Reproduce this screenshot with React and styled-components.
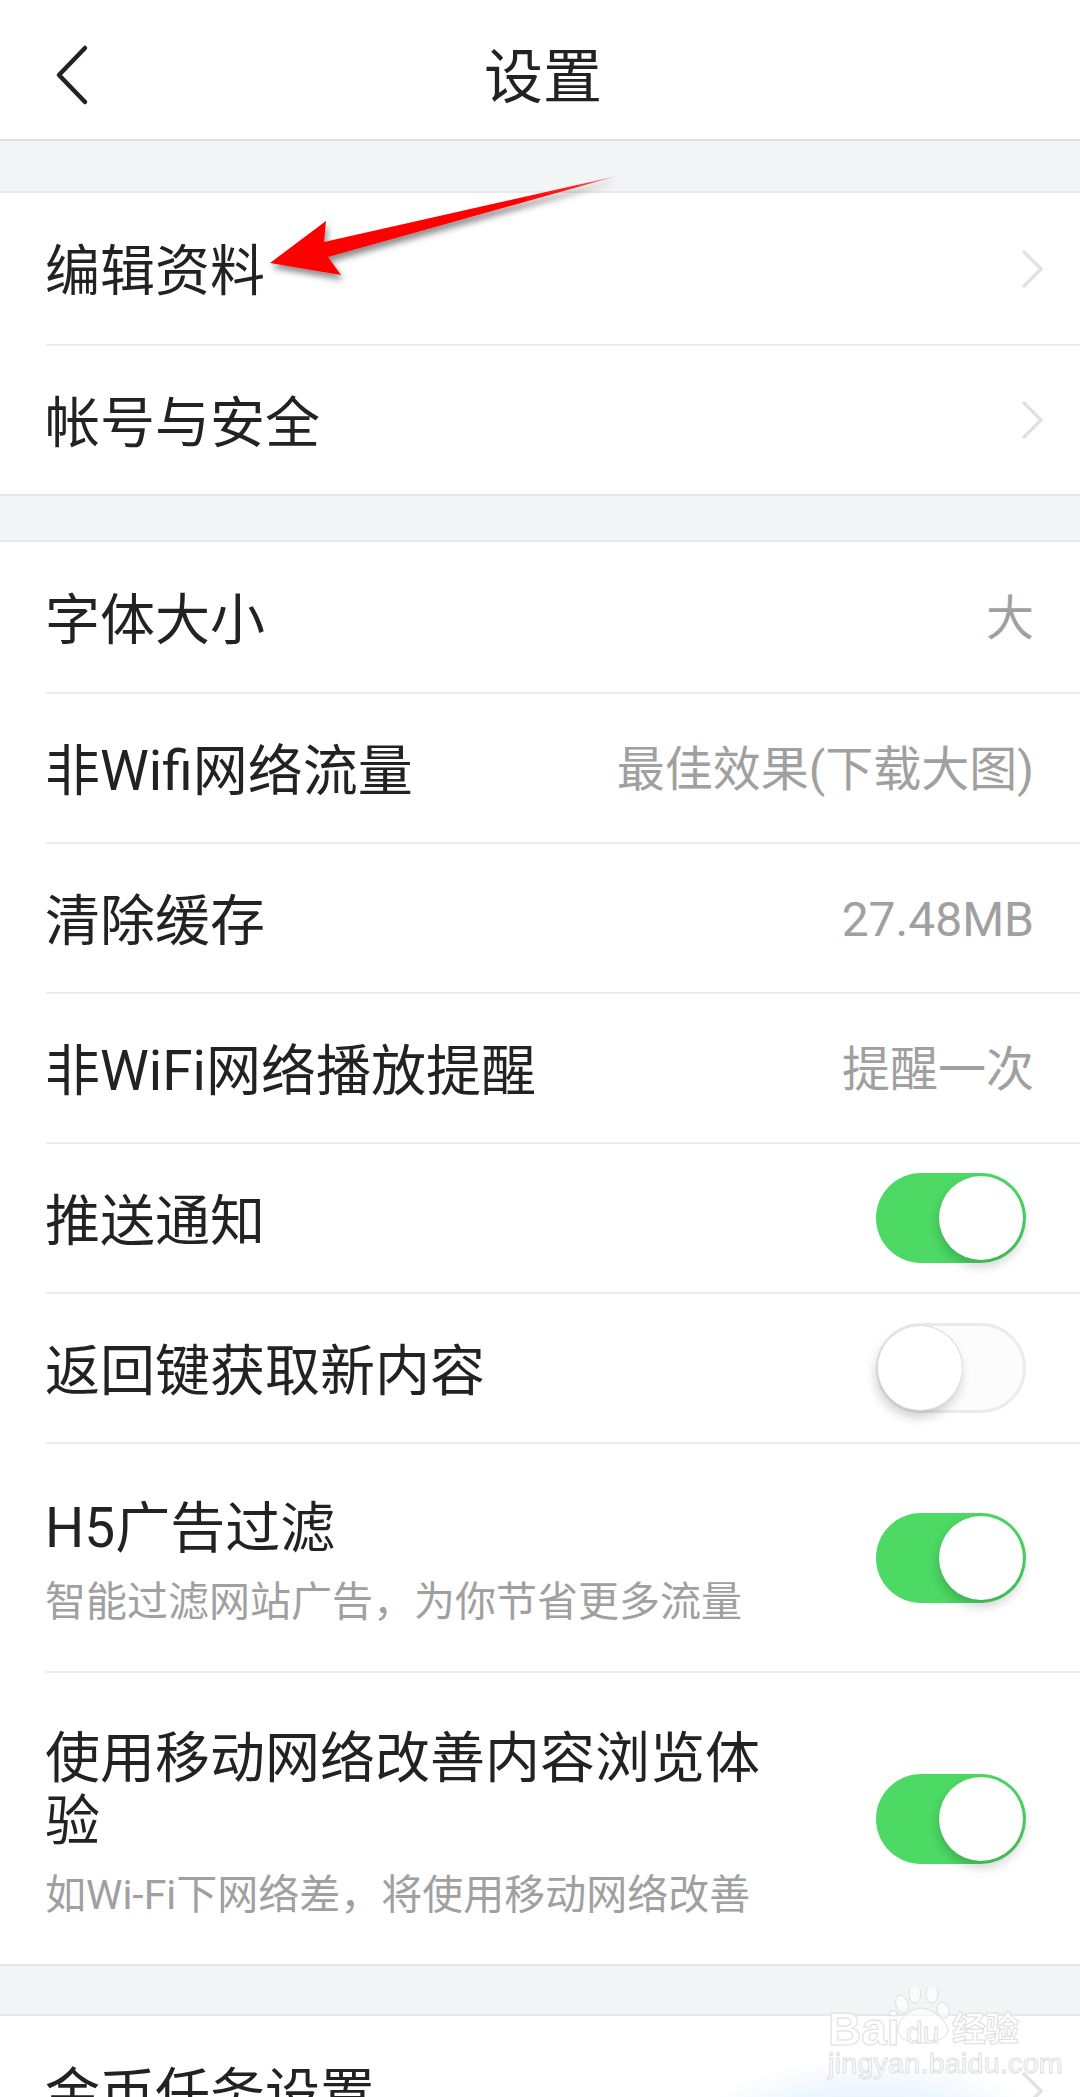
import React from "react";
import styled, { createGlobalStyle } from "styled-components";

const Global = createGlobalStyle`
  html, body { margin: 0; padding: 0; background: #fff; }
  * { box-sizing: border-box; }
`;
const Page = styled.div`
  position: relative;
  width: 1080px;
  height: 2097px;
  overflow: hidden;
  background: #f3f4f6;
  font-family: Roboto, "Noto Sans CJK SC", "Noto Sans", sans-serif;
  color: #222;
`;
const Header = styled.header`
  height: 141px;
  background: #fff;
  border-bottom: 2px solid #e0e0e0;
  display: flex;
  align-items: center;
  justify-content: center;
  position: relative;
`;
const Back = styled.svg`
  position: absolute;
  left: 52px;
  top: 36px;
`;
const Title = styled.h1`
  margin: 0;
  font-size: 59px;
  font-weight: 400;
  line-height: 1;
  padding: 15px 0 0 6px;
`;
const Section = styled.section`
  background: #fff;
  margin-top: ${p => p.$gap}px;
  border-top: 2px solid #e8e8e8;
  border-bottom: 2px solid #e4e4e4;
`;
const Row = styled.div`
  height: ${p => p.$h}px;
  margin-left: 46px;
  padding-right: ${p => p.$pr ?? 46}px;
  display: flex;
  align-items: center;
  justify-content: space-between;
  border-bottom: ${p => (p.$last ? "none" : "2px solid #ececec")};
`;
const TextCol = styled.div`
  display: flex;
  flex-direction: column;
  padding-top: 6px;
  width: ${p => (p.$wide ? "730px" : "auto")};
`;
const Label = styled.div`
  font-size: 55px;
  line-height: 63px;
  font-weight: 400;
  margin-left: -1px;
  padding-top: 6px;
  color: #222;
`;
const Sub = styled.div`
  font-size: 41px;
  line-height: 56px;
  margin-top: 14px;
  margin-left: -1px;
  white-space: nowrap;
  color: #a0a0a0;
`;
const Value = styled.div`
  font-size: 48px;
  line-height: 1;
  padding-top: 4px;
  color: #a0a0a0;
`;
const Chevron = styled.svg`
  display: block;
`;
const Track = styled.div`
  width: 150px;
  height: 90px;
  border-radius: 45px;
  flex: none;
  position: relative;
  background: ${p => (p.$on ? "#4cd964" : "#fcfcfc")};
  border: ${p => (p.$on ? "none" : "3px solid #ebebeb")};
`;
const Knob = styled.div`
  position: absolute;
  width: 84px;
  height: 84px;
  border-radius: 50%;
  background: #fff;
  top: ${p => (p.$on ? "3px" : "0")};
  ${p => (p.$on ? "right: 3px;" : "left: -1px;")}
  box-shadow: ${p => (p.$on
    ? "0 6px 12px rgba(0,0,0,0.2)"
    : "0 0 0 1px #ddd, -2px 7px 12px rgba(0,0,0,0.2)")};
`;
const Arrow = styled.svg`
  position: absolute;
  left: 0;
  top: 0;
  pointer-events: none;
`;
const Glow = styled.div`
  position: absolute;
  left: 700px;
  top: 2058px;
  width: 340px;
  height: 124px;
  border-radius: 50%;
  background: radial-gradient(closest-side, #e4f1fd 0%, #eef6fe 55%, rgba(255,255,255,0) 100%);
`;
const Watermark = styled.div`
  position: absolute;
  left: 826px;
  top: 1978px;
  width: 200px;
  height: 100px;
  color: #fff;
  -webkit-text-stroke: 1px #dedede;
  font-family: "Liberation Sans", sans-serif;
`;
const Paw = styled.svg`
  position: absolute;
  left: 68px;
  top: 10px;
`;
const WmBrand = styled.div`
  position: absolute;
  left: 2px;
  top: 32px;
  font-size: 46px;
  line-height: 38px;
  font-weight: 700;
`;
const WmDu = styled.div`
  position: absolute;
  left: 80px;
  top: 42px;
  font-size: 30px;
  line-height: 26px;
`;
const WmCn = styled.div`
  position: absolute;
  left: 126px;
  top: 30px;
  font-family: "Noto Sans CJK SC", sans-serif;
  font-size: 34px;
  line-height: 38px;
  font-weight: 700;
  letter-spacing: -1px;
`;
const WmUrl = styled.div`
  position: absolute;
  left: 2px;
  top: 71px;
  font-size: 28.5px;
  line-height: 28px;
  letter-spacing: 0.3px;
`;

const Arrowhead = () => (
  <Chevron width="26" height="42" viewBox="0 0 26 42">
    <path d="M3 3 L21 21 L3 39" fill="none" stroke="#e2e2e2" strokeWidth="3.5" />
  </Chevron>
);
const Toggle = ({ on }) => (
  <Track $on={on}><Knob $on={on} /></Track>
);

export default function App() {
  return (
    <Page>
      <Global />
      <Header>
        <Back width="40" height="78" viewBox="0 0 40 78">
          <path d="M33 12 L7 39 L33 66" fill="none" stroke="#222" strokeWidth="4.5" strokeLinecap="round" strokeLinejoin="round" />
        </Back>
        <Title>设置</Title>
      </Header>
      <Section $gap={50}>
        <Row $h={153} $pr={34}><Label>编辑资料</Label><Arrowhead /></Row>
        <Row $h={148} $pr={34} $last><Label>帐号与安全</Label><Arrowhead /></Row>
      </Section>
      <Section $gap={44}>
        <Row $h={152}><Label>字体大小</Label><Value>大</Value></Row>
        <Row $h={150}><Label>非Wifi网络流量</Label><Value>最佳效果(下载大图)</Value></Row>
        <Row $h={150}><Label>清除缓存</Label><Value>27.48MB</Value></Row>
        <Row $h={150}><Label>非WiFi网络播放提醒</Label><Value>提醒一次</Value></Row>
        <Row $h={150} $pr={54}><Label>推送通知</Label><Toggle on /></Row>
        <Row $h={150} $pr={54}><Label>返回键获取新内容</Label><Toggle /></Row>
        <Row $h={229} $pr={54}>
          <TextCol>
            <Label>H5广告过滤</Label>
            <Sub>智能过滤网站广告，为你节省更多流量</Sub>
          </TextCol>
          <Toggle on />
        </Row>
        <Row $h={291} $pr={54} $last>
          <TextCol $wide>
            <Label>使用移动网络改善内容浏览体验</Label>
            <Sub>如Wi-Fi下网络差，将使用移动网络改善</Sub>
          </TextCol>
          <Toggle on />
        </Row>
      </Section>
      <Section $gap={48}>
        <Row $h={150} $pr={34} $last><Label>金币任务设置</Label><Arrowhead /></Row>
      </Section>
      <Arrow width="1080" height="400" viewBox="0 0 1080 400">
        <defs>
          <linearGradient id="arrowFill" x1="617" y1="176" x2="270" y2="262" gradientUnits="userSpaceOnUse">
            <stop offset="0" stopColor="#ff9a9a" />
            <stop offset="0.12" stopColor="#ff2020" />
            <stop offset="0.3" stopColor="#ff0000" />
          </linearGradient>
          <filter id="arrowShadow" x="-10%" y="-20%" width="120%" height="150%">
            <feDropShadow dx="2" dy="5" stdDeviation="3" floodColor="#000" floodOpacity="0.45" />
          </filter>
        </defs>
        <polygon
          points="270,263 326,221 324,242 617,176 328,257 341,275"
          fill="url(#arrowFill)"
          filter="url(#arrowShadow)"
        />
      </Arrow>
      <Glow />
      <Watermark>
        <Paw width="62" height="62" viewBox="0 0 62 62">
          <g fill="#fff" fillOpacity="0.6" stroke="#dedede" strokeWidth="1">
            <ellipse cx="8" cy="16" rx="6" ry="9" transform="rotate(-20 8 16)" />
            <ellipse cx="21" cy="6" rx="6" ry="9" />
            <ellipse cx="38" cy="6" rx="6" ry="9" />
            <ellipse cx="49" cy="22" rx="6" ry="8" transform="rotate(-15 49 22)" />
            <path d="M4 41 C4 32 16 20 27 20 C38 20 52 32 54 41 C54 50 42 55 28 55 C14 55 4 50 4 41 Z" />
          </g>
        </Paw>
        <WmBrand>Bai</WmBrand>
        <WmDu>du</WmDu>
        <WmCn>经验</WmCn>
        <WmUrl>jingyan.baidu.com</WmUrl>
      </Watermark>
    </Page>
  );
}
